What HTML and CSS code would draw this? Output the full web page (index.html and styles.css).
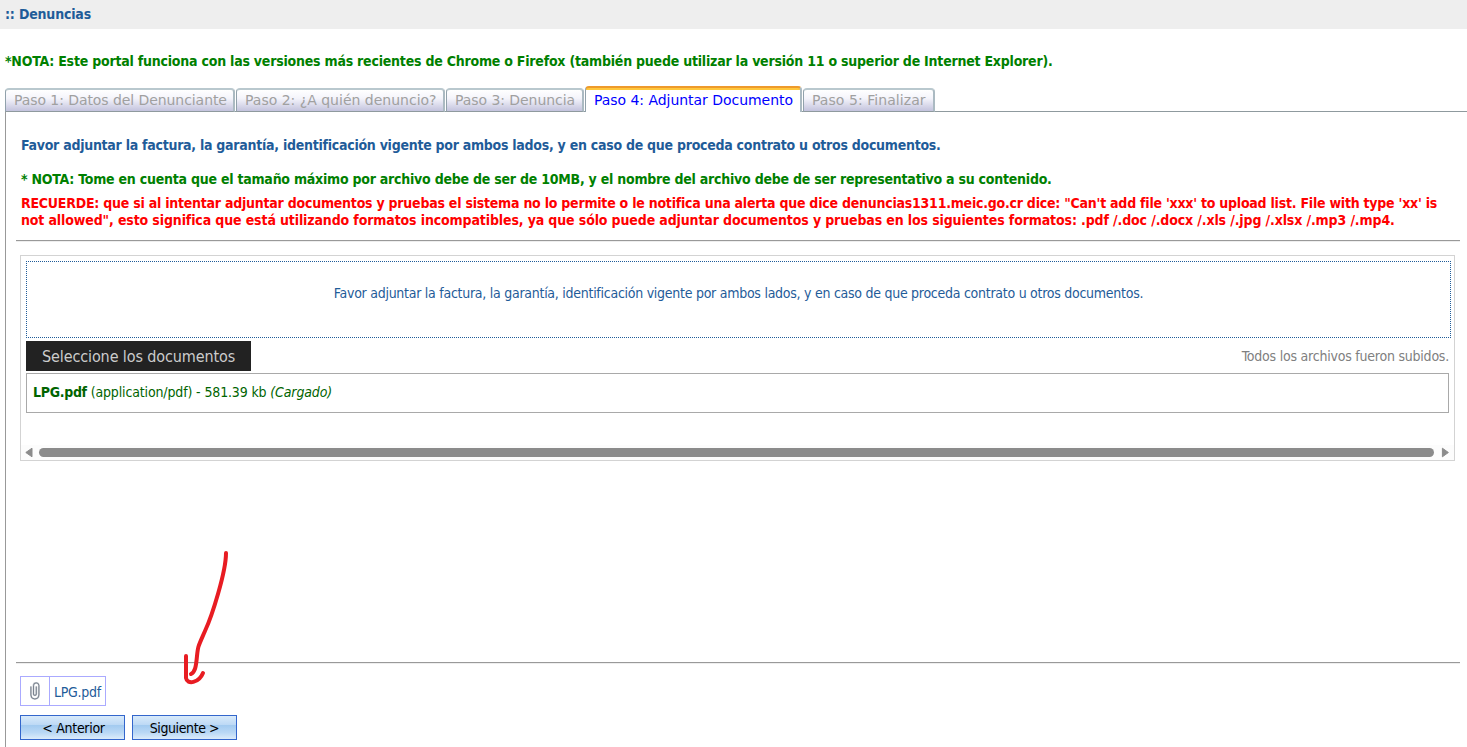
FILE: index.html
```html
<!DOCTYPE html>
<html lang="es">
<head>
<meta charset="utf-8">
<title>Denuncias</title>
<link rel="stylesheet" href="styles.css">
</head>
<body>
<header class="page-title"><span class="t-title">:: Denuncias</span></header>
<p class="browser-note"><span class="t-browser">*NOTA: Este portal funciona con las versiones más recientes de Chrome o Firefox (también puede utilizar la versión 11 o superior de Internet Explorer).</span></p>
<nav class="tabs">
  <div class="tab tab-1">Paso 1: Datos del Denunciante</div>
  <div class="tab tab-2">Paso 2: ¿A quién denuncio?</div>
  <div class="tab tab-3">Paso 3: Denuncia</div>
  <div class="tab tab-4 active">Paso 4: Adjuntar Documento</div>
  <div class="tab tab-5">Paso 5: Finalizar</div>
</nav>
<main class="panel">
  <p class="intro"><span class="t-intro">Favor adjuntar la factura, la garantía, identificación vigente por ambos lados, y en caso de que proceda contrato u otros documentos.</span></p>
  <p class="size-note"><span class="t-size">* NOTA: Tome en cuenta que el tamaño máximo por archivo debe de ser de 10MB, y el nombre del archivo debe de ser representativo a su contenido.</span></p>
  <p class="warning"><span class="t-warn1">RECUERDE: que si al intentar adjuntar documentos y pruebas el sistema no lo permite o le notifica una alerta que dice denuncias1311.meic.go.cr dice: "Can't add file 'xxx' to upload list. File with type 'xx' is</span><br><span class="t-warn2">not allowed", esto significa que está utilizando formatos incompatibles, ya que sólo puede adjuntar documentos y pruebas en los siguientes formatos: .pdf /.doc /.docx /.xls /.jpg /.xlsx /.mp3 /.mp4.</span></p>
  <div class="rule"></div>
  <section class="uploader">
    <div class="dropzone"><span class="t-drop">Favor adjuntar la factura, la garantía, identificación vigente por ambos lados, y en caso de que proceda contrato u otros documentos.</span></div>
    <div class="upload-bar">
      <div class="select-btn"><span class="t-select">Seleccione los documentos</span></div>
      <div class="status"><span class="t-status">Todos los archivos fueron subidos.</span></div>
    </div>
    <div class="file-row"><b>LPG.pdf</b> <span>(application/pdf) - 581.39 kb</span> <i>(Cargado)</i></div>
    <div class="scrollbar">
      <svg width="9" height="11" viewBox="0 0 9 11"><path d="M8 1.2v8.6L1.8 5.5z" fill="#8b8b8b" stroke="#8b8b8b" stroke-width="1" stroke-linejoin="round"/></svg>
      <div class="thumb"></div>
      <svg width="9" height="11" viewBox="0 0 9 11"><path d="M2.4 1.2v8.6l6-4.3z" fill="#8b8b8b" stroke="#8b8b8b" stroke-width="1" stroke-linejoin="round"/></svg>
    </div>
  </section>
  <div class="rule rule-bottom"></div>
  <div class="attachment">
    <div class="clip">
      <svg width="10" height="18" viewBox="0 0 10 18" fill="none" stroke-linecap="round"><path d="M.9 5v8a4 4 0 0 0 8 0V3.6a2.7 2.7 0 0 0-5.4 0V12a1.4 1.4 0 0 0 2.8 0V5" stroke="#c9cdd3" stroke-width="1.9"/><path d="M.9 5v8a4 4 0 0 0 8 0V3.6a2.7 2.7 0 0 0-5.4 0V12a1.4 1.4 0 0 0 2.8 0V5" stroke="#727b87" stroke-width=".9"/></svg>
    </div>
    <div class="clip-name">LPG.pdf</div>
  </div>
  <div class="actions">
    <button class="btn t-prev">&lt; Anterior</button>
    <button class="btn t-next">Siguiente &gt;</button>
  </div>
</main>
<svg class="arrow" width="60" height="145" viewBox="0 0 60 145" fill="none" stroke="#e81c22" stroke-width="4" stroke-linecap="round" stroke-linejoin="round"><path d="M46 8C46 27 32 71 25 86C18 102 18 101 17 111C16 122 15 127 11 129"/><path d="M6 111V133C7 140 19 138 23 128"/></svg>
</body>
</html>
```

FILE: styles.css
```css
* { box-sizing: border-box; }
body {
  margin: 0;
  height: 747px;
  overflow: hidden;
  position: relative;
  display: flex;
  flex-direction: column;
  background: #fff;
  color: #1f5c99;
  font-family: "DejaVu Sans Condensed", "DejaVu Sans", sans-serif;
  font-stretch: condensed;
  font-size: 14px;
  line-height: 17px;
  white-space: nowrap;
}
p { margin: 0; }
.page-title {
  height: 29px;
  padding: 6px 0 0 5px;
  background: #eee;
  font-weight: bold;
}
.browser-note {
  padding: 24px 0 0 5px;
  height: 57px;
  color: green;
  font-weight: bold;
}
.t-title { letter-spacing: -0.18px; }
.t-browser { letter-spacing: -0.22px; }
.t-intro { letter-spacing: -0.265px; }
.t-size { letter-spacing: -0.235px; }
.t-warn1 { letter-spacing: -0.235px; }
.t-warn2 { letter-spacing: -0.13px; }
.t-drop { letter-spacing: -0.265px; }
.t-select { letter-spacing: -0.11px; }
.t-status { letter-spacing: -0.22px; }
.tabs {
  display: flex;
  align-items: flex-end;
  gap: 1px;
  height: 26px;
  padding-left: 5px;
  background: linear-gradient(#8f9a9e, #8f9a9e) 5px 25px / 100% 1px no-repeat;
  font-family: "DejaVu Sans", sans-serif;
  font-stretch: normal;
}
.tab {
  height: 24px;
  padding: 2px 0 0 8px;
  border: 1px solid #91a1ab;
  border-top: 2px solid #b9c8ce;
  border-right: 2px solid #abbac2;
  border-bottom-color: #8f9a9e;
  border-radius: 4px 4px 0 0;
  background: linear-gradient(#fff, #f4f4fb 40%, #c3c3dd);
  color: #a0a0a0;
}
.tab.active {
  height: 26px;
  padding-top: 4px;
  border-top: 2px solid #ee9a2c;
  border-bottom: 0;
  background: linear-gradient(#ffc73c 2px, #fff 2px);
  color: #00f;
}
.tab-1 { width: 230px; letter-spacing: -0.07px; }
.tab-2 { width: 209px; }
.tab-3 { width: 138px; letter-spacing: -0.06px; }
.tab-4 { width: 217px; letter-spacing: -0.04px; }
.tab-5 { width: 132px; letter-spacing: 0.06px; }
.panel {
  flex: 1;
  margin-left: 5px;
  padding: 25px 0 0 10px;
  border-left: 1px solid #999;
}
.intro, .size-note, .warning { padding-left: 5px; font-weight: bold; }
.size-note { padding-top: 17px; color: green; }
.warning { padding-top: 7px; color: red; }
.rule {
  width: 1444px;
  height: 2px;
  margin-top: 11px;
  border-top: 1px solid #999;
  border-bottom: 1px solid #eee;
}
.uploader {
  width: 1435px;
  height: 206px;
  margin: 13px 0 0 4px;
  padding: 5px 3px 0 5px;
  border: 1px solid #d3d3d3;
}
.dropzone {
  height: 77px;
  padding-top: 23px;
  border: 1px dotted #1f5c99;
  text-align: center;
}
.upload-bar {
  display: flex;
  justify-content: space-between;
  height: 30px;
  margin-top: 3px;
}
.select-btn {
  width: 225px;
  padding: 7px 0 0 16px;
  background: #222;
  color: #ccc;
  font-size: 16px;
}
.status { padding: 7px 2px 0 0; color: gray; }
.file-row {
  height: 40px;
  margin: 2px 2px 0 0;
  padding: 10px 0 0 6px;
  border: 1px solid #a9a9a9;
  color: #006400;
  letter-spacing: -0.14px;
}
.file-row b { letter-spacing: -0.3px; }
.scrollbar {
  display: flex;
  align-items: center;
  justify-content: space-between;
  height: 15px;
  margin: 32px -3px 0 -5px;
  padding: 0 5px 0 3px;
  background: #fcfcfc;
}
.thumb { width: 1395px; height: 9px; border-radius: 5px; background: #8b8b8b; }
.rule-bottom { margin-top: 201px; }
.attachment {
  display: flex;
  width: 86px;
  height: 30px;
  margin: 12px 0 0 4px;
  border: 1px solid #aaf;
}
.clip {
  display: flex;
  align-items: center;
  justify-content: center;
  width: 29px;
  border-right: 1px solid #aaf;
}
.clip-name { padding: 7px 0 0 4px; letter-spacing: -0.25px; }
.actions { display: flex; gap: 7px; margin: 9px 0 0 4px; }
.btn {
  width: 105px;
  height: 25px;
  padding: 2px 0 0;
  border: 1px solid #3366cc;
  background: linear-gradient(#d8eafa 0, #bdd9f5 38%, #a2caf0 40%, #b9d8f5 72%, #dcecfa);
  color: #000;
  font: inherit;
}
.t-prev { padding-left: 2px; letter-spacing: -0.3px; }
.t-next { letter-spacing: -0.4px; }
.arrow { position: absolute; left: 180px; top: 545px; }
```
